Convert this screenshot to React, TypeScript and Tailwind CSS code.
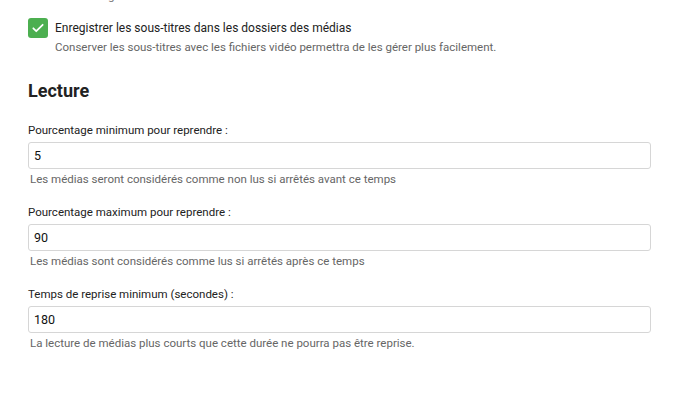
import React from 'react';

type Field = { label: string; value: string; help: string };

const fields: Field[] = [
  {
    label: 'Pourcentage minimum pour reprendre :',
    value: '5',
    help: 'Les médias seront considérés comme non lus si arrêtés avant ce temps',
  },
  {
    label: 'Pourcentage maximum pour reprendre :',
    value: '90',
    help: 'Les médias sont considérés comme lus si arrêtés après ce temps',
  },
  {
    label: 'Temps de reprise minimum (secondes) :',
    value: '180',
    help: 'La lecture de médias plus courts que cette durée ne pourra pas être reprise.',
  },
];

function NumberField({ field }: { field: Field }) {
  return (
    <div className="mb-[19px]">
      <label className="block text-[11.5px] leading-[14px] text-[#222] mb-[5px]">{field.label}</label>
      <input
        type="text"
        defaultValue={field.value}
        className="block w-full h-[27px] px-[5px] text-[12.5px] text-[#111] border border-[#d6d6d6] rounded-[3px] outline-none bg-white"
      />
      <div className="text-[11.5px] leading-[14px] text-[#666] mt-[3px] pl-[2px]">{field.help}</div>
    </div>
  );
}

export default function App() {
  return (
    <div className="w-[690px] h-[407px] overflow-hidden bg-white font-['Roboto','Liberation_Sans',sans-serif] pl-[28px] pr-[39px]">
      {/* bout de la ligne précédente, coupée par le haut */}
      <div className="h-[18px] relative">
        <span className="absolute left-[80px] -top-[11px] text-[11.5px] leading-[14px] text-[#777]">g</span>
      </div>

      <div className="flex items-start">
        <div className="w-[20px] h-[20px] rounded-[3px] bg-[#4caf50] flex items-center justify-center shrink-0">
          <svg width="14" height="14" viewBox="0 0 24 24" fill="none" stroke="white" strokeWidth="3" strokeLinecap="round" strokeLinejoin="round">
            <path d="M4 12.5l5 5L20 6.5" />
          </svg>
        </div>
        <div className="ml-[7px]">
          <div className="text-[12px] leading-[20px] text-[#222]">
            Enregistrer les sous-titres dans les dossiers des médias
          </div>
          <div className="text-[11.5px] leading-[14px] text-[#666] mt-[2px]">
            Conserver les sous-titres avec les fichiers vidéo permettra de les gérer plus facilement.
          </div>
        </div>
      </div>

      <h2 className="text-[18px] leading-[22px] font-bold text-[#222] mt-[26px] mb-[21px]">Lecture</h2>

      {fields.map((f) => (
        <NumberField key={f.label} field={f} />
      ))}
    </div>
  );
}
